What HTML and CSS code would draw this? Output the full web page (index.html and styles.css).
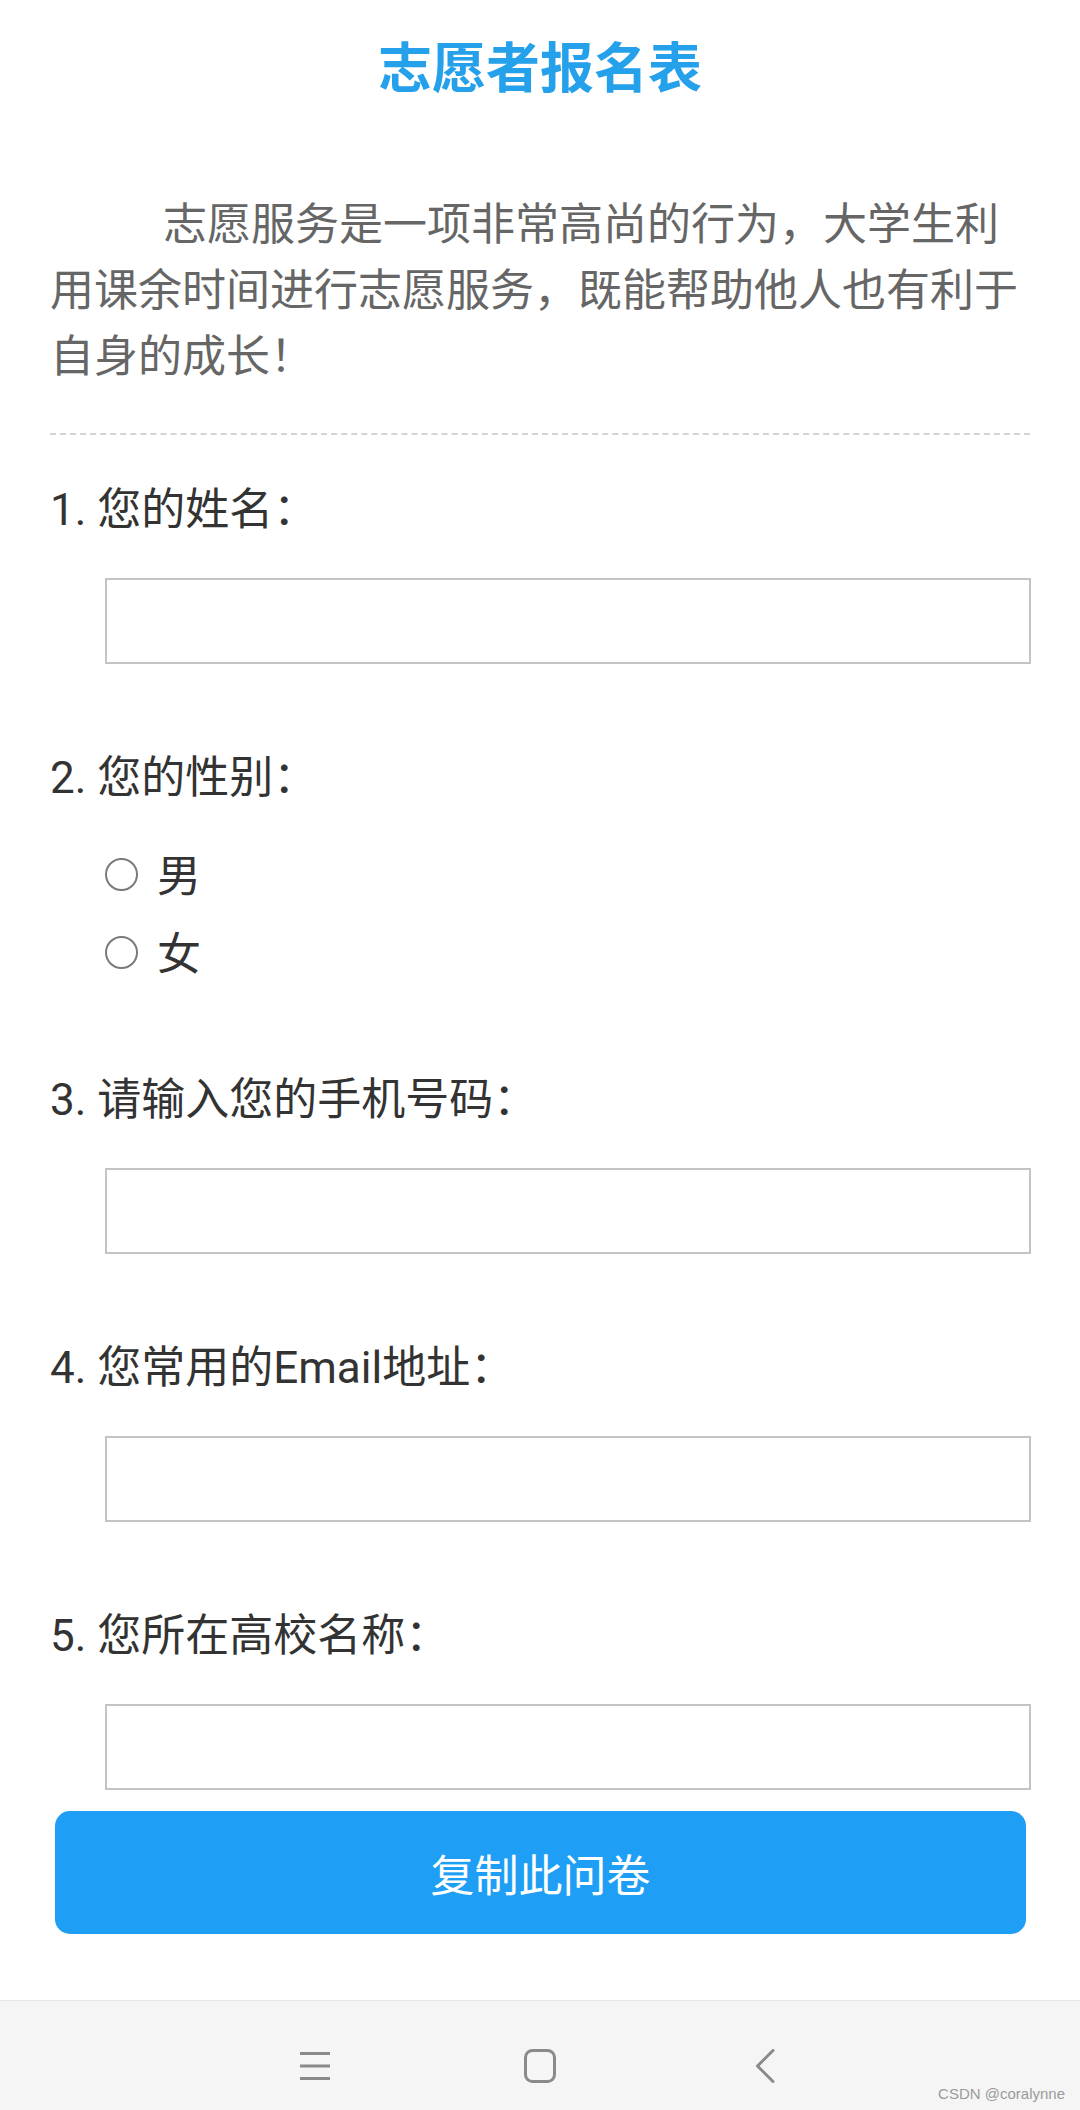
FILE: index.html
```html
<!DOCTYPE html>
<html lang="zh-CN">
<head>
<meta charset="utf-8">
<title>志愿者报名表</title>
<link rel="stylesheet" href="styles.css">
</head>
<body>
<main class="page">
  <h1 class="title">志愿者报名表</h1>
  <p class="intro">志愿服务是一项非常高尚的行为，大学生利用课余时间进行志愿服务，既能帮助他人也有利于自身的成长！</p>
  <div class="divider"></div>

  <section class="question first">
    <p class="q-label">1. 您的姓名：</p>
    <input class="q-input" type="text">
  </section>

  <section class="question">
    <p class="q-label">2. 您的性别：</p>
    <div class="radio-group">
      <label class="radio-row"><input class="radio" type="radio" name="sex"><span class="radio-text">男</span></label>
      <label class="radio-row"><input class="radio" type="radio" name="sex"><span class="radio-text">女</span></label>
    </div>
  </section>

  <section class="question after-radio">
    <p class="q-label">3. 请输入您的手机号码：</p>
    <input class="q-input" type="text">
  </section>

  <section class="question">
    <p class="q-label">4. 您常用的Email地址：</p>
    <input class="q-input" type="text">
  </section>

  <section class="question">
    <p class="q-label">5. 您所在高校名称：</p>
    <input class="q-input" type="text">
  </section>

  <button class="copy-btn" type="button">复制此问卷</button>
</main>

<nav class="navbar">
  <div class="nav-slot">
    <svg width="30" height="28" viewBox="0 0 30 28" aria-hidden="true">
      <path d="M0 1.5H30M0 14H30M0 26.5H30" stroke="#8a8a8a" stroke-width="3" fill="none"/>
    </svg>
  </div>
  <div class="nav-slot">
    <svg width="32" height="34" viewBox="0 0 32 34" aria-hidden="true">
      <rect x="1.5" y="1.5" width="29" height="31" rx="7" ry="7" stroke="#8a8a8a" stroke-width="3" fill="none"/>
    </svg>
  </div>
  <div class="nav-slot">
    <svg width="22" height="34" viewBox="0 0 22 34" aria-hidden="true">
      <path d="M19 1.5L3.5 17L19 32.5" stroke="#8a8a8a" stroke-width="3" fill="none" stroke-linecap="round" stroke-linejoin="round"/>
    </svg>
  </div>
  <span class="watermark">CSDN @coralynne</span>
</nav>
</body>
</html>
```

FILE: styles.css
```css
html, body {
  margin: 0;
  padding: 0;
}

body {
  width: 1080px;
  min-height: 2110px;
  display: flex;
  flex-direction: column;
  background: #ffffff;
  font-family: Roboto, "Noto Sans CJK SC", sans-serif;
  color: #333333;
}

.page {
  padding: 0 50px;
}

.title {
  margin: 30px 0 0;
  font-family: "Noto Sans CJK SC", sans-serif;
  font-size: 54px;
  line-height: 70px;
  font-weight: 700;
  text-align: center;
  color: #25a0ea;
}

.intro {
  margin: 88px 0 0;
  font-family: "Noto Sans CJK SC", sans-serif;
  font-size: 44px;
  line-height: 66px;
  text-indent: 113px;
  color: #666666;
}

.divider {
  margin-top: 47px;
  border-top: 2px dashed #d4d4d4;
}

.question {
  margin-top: 84px;
}

.question.first {
  margin-top: 45px;
}

.question.after-radio {
  margin-top: 80px;
}

.q-label {
  margin: 0;
  font-size: 44px;
  line-height: 60px;
  color: #333333;
}

.q-input {
  display: block;
  box-sizing: border-box;
  width: 926px;
  height: 86px;
  margin: 38px 0 0 55px;
  border: 2px solid #c4c4c4;
  border-radius: 0;
  background: #ffffff;
  outline: none;
  padding: 0 12px;
  font-size: 40px;
}

.radio-group {
  margin-top: 26px;
}

.radio-row {
  display: flex;
  align-items: center;
  height: 78px;
  padding-left: 55px;
}

.radio {
  appearance: none;
  -webkit-appearance: none;
  box-sizing: border-box;
  width: 33px;
  height: 33px;
  margin: 3px 0 0;
  border: 2px solid #7a7a7a;
  border-radius: 50%;
  background: #ffffff;
}

.radio-text {
  margin-left: 19px;
  font-family: "Noto Sans CJK SC", sans-serif;
  font-size: 44px;
  line-height: 60px;
  color: #333333;
}

.copy-btn {
  display: block;
  box-sizing: border-box;
  width: 971px;
  height: 123px;
  margin: 21px 0 0 5px;
  border: none;
  border-radius: 15px;
  background: #1e9ef4;
  color: #ffffff;
  font-family: "Noto Sans CJK SC", sans-serif;
  font-size: 44px;
  font-weight: 400;
}

.navbar {
  position: relative;
  margin-top: auto;
  height: 110px;
  box-sizing: border-box;
  padding-top: 20px;
  border-top: 1px solid #e6e6e6;
  background: #f5f5f5;
  display: flex;
  justify-content: center;
  align-items: center;
}

.nav-slot {
  width: 225px;
  display: flex;
  justify-content: center;
  align-items: center;
}

.watermark {
  position: absolute;
  right: 15px;
  bottom: 8px;
  font-family: "Liberation Sans", sans-serif;
  font-size: 15px;
  color: #9a9a9a;
}
```
